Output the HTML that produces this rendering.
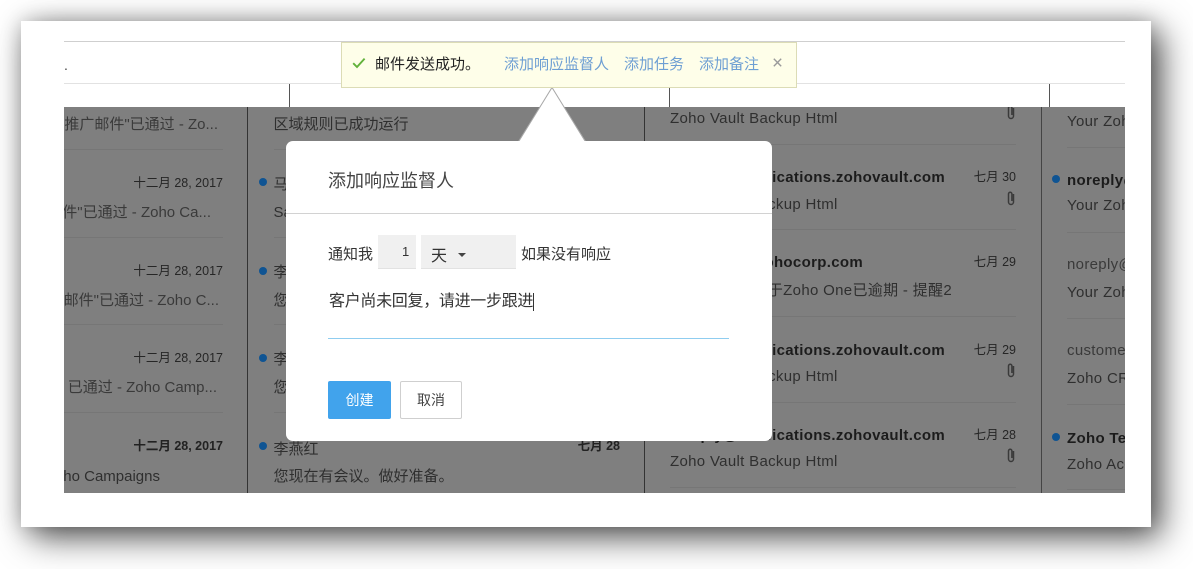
<!DOCTYPE html>
<html><head><meta charset="utf-8">
<style>
html,body{margin:0;padding:0;background:#fff;width:1193px;height:569px;overflow:hidden}
body{position:relative;font-family:"Liberation Sans","Noto Sans CJK SC",sans-serif;color:#333}
.a,.t,.r{position:absolute;white-space:nowrap}
.t{font-size:15px;line-height:20px;color:#2f2f2f}
.l{letter-spacing:.32px}
.r{font-size:12.5px;line-height:16px;color:#262626;text-align:right}
.b{font-weight:bold;color:#1c1c1c}
.g{color:#3a3a3a}
.dot{position:absolute;width:8px;height:8px;border-radius:50%;background:#0f5493}
.hr{position:absolute;height:1px;background:#767676}
.v{position:absolute;width:1px;background:#333}
#card{position:absolute;left:21px;top:21px;width:1130px;height:506px;background:#fff;box-shadow:10px 10px 32px rgba(0,0,0,.68),0 0 20px rgba(0,0,0,.2)}
#clip{position:absolute;left:64px;top:107px;width:1061px;height:386px;background:#7f7f7f;overflow:hidden}
</style></head><body>
<div id="card"></div>
<div class="a" style="left:64px;top:41px;width:1061px;height:1px;background:#cfcfcf"></div>
<div class="a" style="left:64px;top:83px;width:1061px;height:1px;background:#e2e2e2"></div>
<div class="a" style="left:64px;top:57px;font-size:14px;line-height:16px;color:#444">.</div>
<div class="v" style="left:289px;top:84px;height:23px;background:#555"></div>
<div class="v" style="left:669px;top:84px;height:23px;background:#555"></div>
<div class="v" style="left:1049px;top:84px;height:23px;background:#555"></div>

<div id="clip">
 <div class="v" style="left:183px;top:0;height:386px"></div>
 <div class="v" style="left:580px;top:0;height:386px"></div>
 <div class="v" style="left:977px;top:0;height:386px;background:#444"></div>

 <div class="t g" style="right:907px;top:8px">推广邮件"已通过 - Zo...</div>
 <div class="hr" style="left:0;top:42px;width:159px"></div>
 <div class="r" style="right:902px;top:68px">十二月 28, 2017</div>
 <div class="t g" style="right:914px;top:96px">邮件"已通过 - Zoho Ca...</div>
 <div class="hr" style="left:0;top:130px;width:159px"></div>
 <div class="r" style="right:902px;top:156px">十二月 28, 2017</div>
 <div class="t g" style="right:906px;top:184px">邮件"已通过 - Zoho C...</div>
 <div class="hr" style="left:0;top:217px;width:159px"></div>
 <div class="r" style="right:902px;top:243px">十二月 28, 2017</div>
 <div class="t g" style="right:908px;top:271px">已通过 - Zoho Camp...</div>
 <div class="hr" style="left:0;top:305px;width:159px"></div>
 <div class="r b" style="right:902px;top:331px;color:#222">十二月 28, 2017</div>
 <div class="t" style="right:965px;top:360px">Zoho Campaigns</div>

 <div class="hr" style="left:210px;top:42px;width:12px"></div>
 <div class="hr" style="left:210px;top:130px;width:12px"></div>
 <div class="hr" style="left:210px;top:217px;width:12px"></div>
 <div class="hr" style="left:210px;top:305px;width:12px"></div>
 <div class="t" style="left:209.5px;top:8px">区域规则已成功运行</div>
 <div class="dot" style="left:195px;top:71px"></div>
 <div class="t" style="left:209.5px;top:68px">马</div>
 <div class="t" style="left:209.5px;top:96px">Sa</div>
 <div class="dot" style="left:195px;top:160px"></div>
 <div class="t" style="left:209.5px;top:156px">李</div>
 <div class="t" style="left:209.5px;top:184px">您</div>
 <div class="dot" style="left:195px;top:247px"></div>
 <div class="t" style="left:209.5px;top:243px">李</div>
 <div class="t" style="left:209.5px;top:271px">您</div>
 <div class="dot" style="left:195px;top:335px"></div>
 <div class="t" style="left:209.5px;top:333px">李燕红</div>
 <div class="t" style="left:209.5px;top:360px">您现在有会议。做好准备。</div>
 <div class="r b" style="right:505px;top:331px;color:#222">七月 28</div>

 <div class="t l" style="left:606px;top:2px">Zoho Vault Backup Html</div>
 <div class="hr" style="left:606px;top:37px;width:346px"></div>
 <div class="t b l" style="right:180px;top:61px">noreply@notifications.zohovault.com</div>
 <div class="r" style="right:109px;top:62px">七月 30</div>
 <div class="t l" style="left:606px;top:88px">Zoho Vault Backup Html</div>
 <div class="hr" style="left:606px;top:122px;width:346px"></div>
 <div class="t b l" style="right:262px;top:146px">support@zohocorp.com</div>
 <div class="r" style="right:109px;top:147px">七月 29</div>
 <div class="t l" style="right:173px;top:174px">您的关于Zoho One已逾期 - 提醒2</div>
 <div class="hr" style="left:606px;top:209px;width:346px"></div>
 <div class="t b l" style="right:180px;top:234px">noreply@notifications.zohovault.com</div>
 <div class="r" style="right:109px;top:235px">七月 29</div>
 <div class="t l" style="left:606px;top:260px">Zoho Vault Backup Html</div>
 <div class="hr" style="left:606px;top:295px;width:346px"></div>
 <div class="t b l" style="right:180px;top:319px">noreply@notifications.zohovault.com</div>
 <div class="r" style="right:109px;top:320px">七月 28</div>
 <div class="t l" style="left:606px;top:345px">Zoho Vault Backup Html</div>
 <div class="hr" style="left:606px;top:380px;width:346px"></div>

 <svg class="a" style="left:942px;top:-3px" width="10" height="16" viewBox="0 0 10 16" fill="none" stroke="#3a3a3a" stroke-width="1.5"><path d="M7.5 4v8a2.5 2.5 0 0 1-5 0V4a1.7 1.7 0 0 1 3.4 0v7"/></svg>
 <svg class="a" style="left:942px;top:83px" width="10" height="16" viewBox="0 0 10 16" fill="none" stroke="#3a3a3a" stroke-width="1.5"><path d="M7.5 4v8a2.5 2.5 0 0 1-5 0V4a1.7 1.7 0 0 1 3.4 0v7"/></svg>
 <svg class="a" style="left:942px;top:255px" width="10" height="16" viewBox="0 0 10 16" fill="none" stroke="#3a3a3a" stroke-width="1.5"><path d="M7.5 4v8a2.5 2.5 0 0 1-5 0V4a1.7 1.7 0 0 1 3.4 0v7"/></svg>
 <svg class="a" style="left:942px;top:340px" width="10" height="16" viewBox="0 0 10 16" fill="none" stroke="#3a3a3a" stroke-width="1.5"><path d="M7.5 4v8a2.5 2.5 0 0 1-5 0V4a1.7 1.7 0 0 1 3.4 0v7"/></svg>

 <div class="t l" style="left:1003px;top:5px">Your Zoho</div>
 <div class="hr" style="left:1003px;top:40px;width:58px"></div>
 <div class="dot" style="left:988px;top:68px"></div>
 <div class="t b l" style="left:1003px;top:64px">noreply@</div>
 <div class="t l" style="left:1003px;top:89px">Your Zoho</div>
 <div class="hr" style="left:1003px;top:125px;width:58px"></div>
 <div class="t g l" style="left:1003px;top:148px">noreply@</div>
 <div class="t l" style="left:1003px;top:176px">Your Zoho</div>
 <div class="hr" style="left:1003px;top:211px;width:58px"></div>
 <div class="t g l" style="left:1003px;top:234px">customer</div>
 <div class="t l" style="left:1003px;top:262px">Zoho CRM</div>
 <div class="hr" style="left:1003px;top:297px;width:58px"></div>
 <div class="dot" style="left:988px;top:326px"></div>
 <div class="t b l" style="left:1003px;top:322px">Zoho Team</div>
 <div class="t l" style="left:1003px;top:348px">Zoho Account</div>
 <div class="hr" style="left:1003px;top:382px;width:58px"></div>
</div>

<!-- arrow -->
<svg class="a" style="left:517px;top:86px" width="70" height="56" viewBox="0 0 70 56"><path d="M1.5 55 L35 1.5 L68.5 55 Z" fill="#fff"/><path d="M2 55 L35 1.5 L68 55" fill="none" stroke="#a8a8a8" stroke-width="1"/></svg>

<!-- dialog -->
<div class="a" style="left:286px;top:141px;width:486px;height:300px;background:#fff;border-radius:7px"></div>
<div class="a" style="left:328px;top:169px;font-size:18px;line-height:24px;color:#444">添加响应监督人</div>
<div class="a" style="left:286px;top:213px;width:486px;height:1px;background:#d2d2d2"></div>
<div class="a" style="left:328px;top:245px;font-size:15px;line-height:20px;color:#333">通知我</div>
<div class="a" style="left:378px;top:235px;width:38px;height:34px;background:#f0f0f0;border-bottom:1px solid #e2e2e2;box-sizing:border-box"></div>
<div class="a" style="left:402px;top:244px;font-size:13px;line-height:16px;color:#333">1</div>
<div class="a" style="left:421px;top:235px;width:95px;height:34px;background:#f0f0f0;border-bottom:1px solid #e2e2e2;box-sizing:border-box"></div>
<div class="a" style="left:431px;top:246px;font-size:16px;line-height:22px;color:#333">天</div>
<div class="a" style="left:458px;top:253px;width:0;height:0;border-left:4.5px solid transparent;border-right:4.5px solid transparent;border-top:4px solid #444"></div>
<div class="a" style="left:521px;top:245px;font-size:15px;line-height:20px;color:#333">如果没有响应</div>
<div class="a" style="left:329px;top:292px;font-size:16px;line-height:20px;color:#333;letter-spacing:-.3px">客户尚未回复，请进一步跟进</div>
<div class="a" style="left:533px;top:293px;width:1px;height:18px;background:#333"></div>
<div class="a" style="left:328px;top:338px;width:401px;height:1px;background:#8fcdf0"></div>
<div class="a" style="left:328px;top:381px;width:63px;height:38px;background:#41a3ec;border-radius:2px;color:#fff;font-size:14px;line-height:38px;text-align:center">创建</div>
<div class="a" style="left:400px;top:381px;width:62px;height:38px;box-sizing:border-box;background:#fff;border:1px solid #cfcfcf;border-radius:2px;color:#444;font-size:14px;line-height:36px;text-align:center">取消</div>

<!-- notification -->
<div class="a" style="left:341px;top:42px;width:456px;height:46px;box-sizing:border-box;background:#fefee9;border:1px solid #dcdcb6"></div>
<svg class="a" style="left:352px;top:57px" width="14" height="12" viewBox="0 0 14 12" fill="none" stroke="#62b23b" stroke-width="1.9"><path d="M1.2 6.2 L5 10 L12.6 1.6"/></svg>
<div class="a" style="left:375px;top:55px;font-size:15px;line-height:20px;color:#222">邮件发送成功。</div>
<div class="a" style="left:504px;top:55px;font-size:15px;line-height:20px;color:#6e9fd3">添加响应监督人</div>
<div class="a" style="left:624px;top:55px;font-size:15px;line-height:20px;color:#6e9fd3">添加任务</div>
<div class="a" style="left:699px;top:55px;font-size:15px;line-height:20px;color:#6e9fd3">添加备注</div>
<svg class="a" style="left:773px;top:58px" width="9" height="9" viewBox="0 0 9 9" fill="none" stroke="#9a9a9a" stroke-width="1.4"><path d="M.8 .8 L8.2 8.2 M8.2 .8 L.8 8.2"/></svg>
</body></html>
